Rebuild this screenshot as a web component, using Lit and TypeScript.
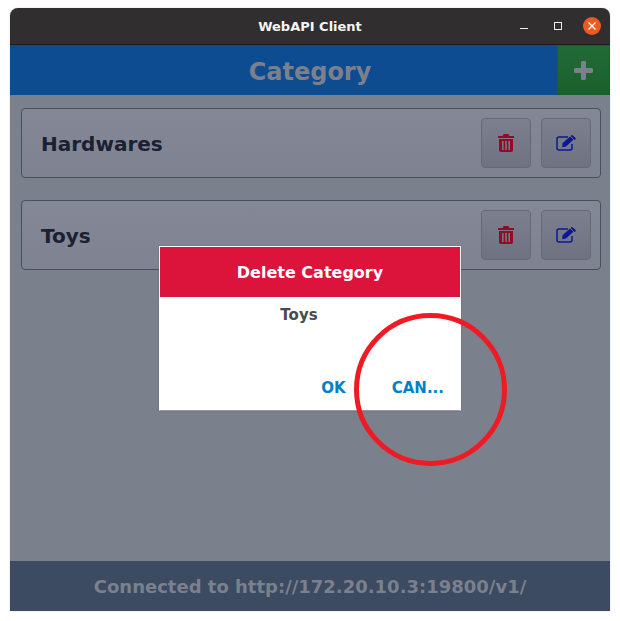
import { css, html, LitElement } from "lit";
import { customElement } from "lit/decorators.js";

const categories = ["Hardwares", "Toys"];

@customElement("app-root")
export class AppRoot extends LitElement {
  static override styles = css`
    :host {
      display: block;
      height: 621px;
      padding: 8px 10px 10px;
      box-sizing: border-box;
      background: #fff;
      font-family: "DejaVu Sans", sans-serif;
      font-weight: 700;
    }

    .window {
      position: relative;
      display: flex;
      flex-direction: column;
      height: 603px;
      overflow: hidden;
      border-radius: 8px 8px 0 0;
      box-shadow: 0 0 1px #777;
    }

    .titlebar {
      display: flex;
      align-items: center;
      justify-content: center;
      position: relative;
      height: 37px;
      box-sizing: border-box;
      padding-top: 1px;
      flex: none;
      background: #302e2e;
      border-bottom: 1px solid #1c1b1b;
      color: #f5f5f5;
      font-size: 13px;
    }

    .controls {
      position: absolute;
      right: 9px;
      top: 9px;
      display: flex;
      align-items: center;
    }

    .minimize {
      margin-right: 26px;
    }

    .maximize {
      margin-right: 21px;
    }

    .close {
      width: 18px;
      height: 18px;
      border-radius: 50%;
      background: #ed5b23;
      display: flex;
      align-items: center;
      justify-content: center;
    }

    .header {
      display: flex;
      height: 50px;
      flex: none;
      background: #0e4c92;
    }

    .header h1 {
      flex: 1;
      margin: 0 0 0 53px;
      padding-top: 2px;
      text-align: center;
      font-size: 24px;
      line-height: 50px;
      height: 48px;
      color: #7b808d;
    }

    .add {
      width: 53px;
      display: flex;
      align-items: center;
      justify-content: center;
      background: linear-gradient(#216b37, #1a602e);
      box-shadow: inset 0 0 0 1px #1a5f2c;
    }

    .content {
      flex: 1;
      display: flex;
      flex-direction: column;
      gap: 22px;
      padding: 13px 9px 0 11px;
      background: #7b808d;
    }

    .card {
      display: flex;
      align-items: center;
      gap: 10px;
      height: 70px;
      box-sizing: border-box;
      padding: 0 9px 0 19px;
      border: 1px solid #4b4f5c;
      border-radius: 4px;
      background: linear-gradient(#838796, #7f8391);
    }

    .card span {
      flex: 1;
      padding-top: 2px;
      font-size: 20px;
      color: #1b2032;
    }

    .btn {
      width: 50px;
      height: 50px;
      box-sizing: border-box;
      display: flex;
      align-items: center;
      justify-content: center;
      border: 1px solid #666a77;
      border-radius: 4px;
      background: linear-gradient(#7c808e, #6f7381);
    }

    .footer {
      height: 50px;
      flex: none;
      box-sizing: border-box;
      padding-top: 1px;
      background: #3c4a62;
      color: #7b808d;
      text-align: center;
      font-size: 18px;
      line-height: 50px;
    }

    .dialog {
      position: absolute;
      left: 149px;
      top: 238px;
      width: 302px;
      height: 165px;
      box-sizing: border-box;
      display: flex;
      flex-direction: column;
      background: #fff;
      border: 1px solid #fff;
      border-bottom-color: #999;
      box-shadow: 0 0 1px #555;
    }

    .dialog header {
      height: 50px;
      flex: none;
      box-sizing: border-box;
      padding-top: 1px;
      background: #dc143c;
      color: #fff;
      text-align: center;
      font-size: 16px;
      line-height: 50px;
    }

    .dialog p {
      flex: 1;
      margin: 9px 0 0;
      padding-right: 22px;
      text-align: center;
      font-size: 15px;
      line-height: 18px;
      color: #4a4a4a;
    }

    .actions {
      display: flex;
      justify-content: flex-end;
      gap: 46px;
      padding: 0 16px 13px 0;
      color: #0080c8;
      font-size: 15px;
      line-height: 18px;
    }

    .ring {
      position: absolute;
      left: 344px;
      top: 305px;
      pointer-events: none;
    }
  `;

  private renderTrash() {
    return html`<svg width="16" height="18" viewBox="0 0 16 18">
      <path
        fill="#930a24"
        fill-rule="evenodd"
        d="M5 1.2A1.4 1.4 0 0 1 6.3 0h3.4A1.4 1.4 0 0 1 11 1.2L11.4 2H16v2H0V2h4.6zM1 5h14v11a2 2 0 0 1-2 2H3a2 2 0 0 1-2-2z M4 7v9h1.6V7zM7.2 7v9h1.6V7zM10.4 7v9H12V7z"
      ></path>
    </svg>`;
  }

  private renderEdit() {
    return html`<svg width="20" height="16" viewBox="0 0 20 16">
      <path
        fill="none"
        stroke="#0c1798"
        stroke-width="1.5"
        d="M16 9v4a2 2 0 0 1-2 2H3a2 2 0 0 1-2-2V4a2 2 0 0 1 2-2h9"
      ></path>
      <path
        fill="#0c1798"
        d="M6.5 8.2 14 1.6l3.4 3.2-7.4 6.8-3.8.6zM15 .5a1.3 1.3 0 0 1 1.8 0l2.6 2.3a1.3 1.3 0 0 1 0 1.8l-1 .5L14.8 1.2z"
      ></path>
    </svg>`;
  }

  override render() {
    return html`
      <div class="window">
        <div class="titlebar">
          WebAPI Client
          <div class="controls">
            <svg class="minimize" width="8" height="8" viewBox="0 0 8 8"><path d="M0 6.5h8" stroke="#eee" stroke-width="1"></path></svg>
            <svg class="maximize" width="8" height="8" viewBox="0 0 8 8">
              <rect x=".5" y=".5" width="7" height="7" fill="none" stroke="#eee"></rect>
            </svg>
            <div class="close">
              <svg width="8" height="8" viewBox="0 0 8 8"><path d="M.5.5l7 7M7.5.5l-7 7" stroke="#fff" stroke-width="1.3"></path></svg>
            </div>
          </div>
        </div>
        <div class="header">
          <h1>Category</h1>
          <div class="add">
            <svg width="19" height="19" viewBox="0 0 19 19">
              <path d="M9.5 2v15M2 9.5h15" stroke="#7b808d" stroke-width="5" stroke-linecap="round"></path>
            </svg>
          </div>
        </div>
        <div class="content">
          ${categories.map(
            (name) => html`
              <div class="card">
                <span>${name}</span>
                <div class="btn">${this.renderTrash()}</div>
                <div class="btn">${this.renderEdit()}</div>
              </div>
            `
          )}
        </div>
        <div class="footer">Connected to http://172.20.10.3:19800/v1/</div>
        <div class="dialog">
          <header>Delete Category</header>
          <p>Toys</p>
          <div class="actions"><span>OK</span><span>CAN...</span></div>
        </div>
        <svg class="ring" width="153" height="153" viewBox="0 0 153 153">
          <circle cx="76.5" cy="76.5" r="74" fill="none" stroke="#ed1c24" stroke-width="5"></circle>
        </svg>
      </div>
    `;
  }
}
